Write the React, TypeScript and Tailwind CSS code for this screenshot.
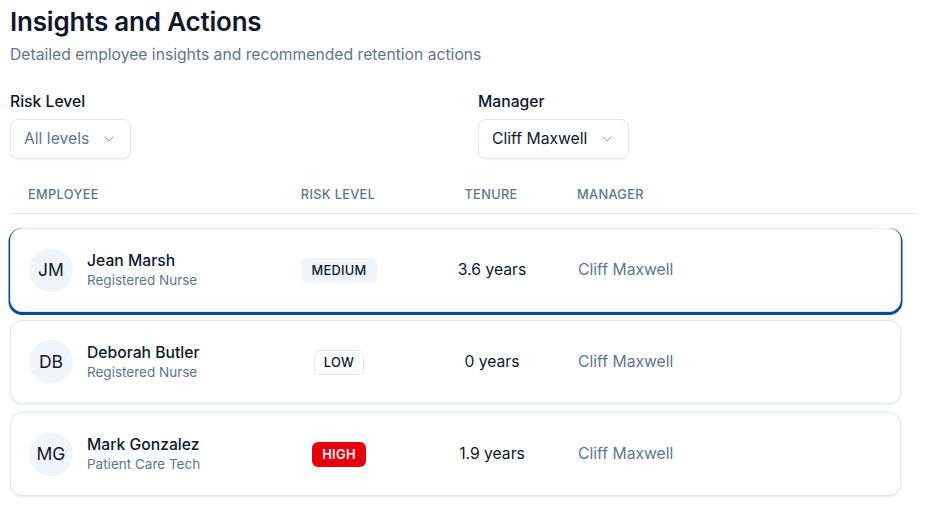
import { ChevronDown } from 'lucide-react';

type Risk = 'medium' | 'low' | 'high';

const employees: { initials: string; name: string; role: string; risk: Risk; tenure: string; manager: string }[] = [
  { initials: 'JM', name: 'Jean Marsh', role: 'Registered Nurse', risk: 'medium', tenure: '3.6 years', manager: 'Cliff Maxwell' },
  { initials: 'DB', name: 'Deborah Butler', role: 'Registered Nurse', risk: 'low', tenure: '0 years', manager: 'Cliff Maxwell' },
  { initials: 'MG', name: 'Mark Gonzalez', role: 'Patient Care Tech', risk: 'high', tenure: '1.9 years', manager: 'Cliff Maxwell' },
];

const badgeStyles: Record<Risk, string> = {
  medium: 'bg-slate-100 text-slate-900 border border-transparent',
  low: 'bg-white text-slate-900 border border-slate-200',
  high: 'bg-red-600 text-white border border-transparent font-semibold',
};

function Select({ value, muted }: { value: string; muted?: boolean }) {
  return (
    <button className="flex items-center gap-3 h-10 px-[13px] rounded-lg border border-slate-200 bg-white shadow-xs text-[15.7px]">
      <span className={muted ? 'text-slate-500' : 'text-slate-900'}>{value}</span>
      <ChevronDown className="w-4 h-4 text-slate-400" strokeWidth={1.5} />
    </button>
  );
}

export default function App() {
  return (
    <div className="min-h-screen bg-white font-['Inter',sans-serif] pl-[10px] pr-[9px] pt-[5px]">
      {/* Header */}
      <h1 className="text-[26px] leading-8 font-semibold text-slate-900 tracking-[-0.2px] mt-[1px]">Insights and Actions</h1>
      <p className="mt-[5px] text-[15.7px] text-slate-500">Detailed employee insights and recommended retention actions</p>

      {/* Filters */}
      <div className="grid grid-cols-[468px_1fr] mt-[23px]">
        <div>
          <label className="block text-[15.7px] font-medium text-slate-900 mb-[6px]">Risk Level</label>
          <Select value="All levels" muted />
        </div>
        <div>
          <label className="block text-[15.7px] font-medium text-slate-900 mb-[6px]">Manager</label>
          <Select value="Cliff Maxwell" />
        </div>
      </div>

      {/* Table */}
      <div className="mt-[17px]">
        <div className="flex items-center h-[38px] pl-[18px] border-b border-slate-200 text-[12.8px] font-medium uppercase tracking-wide text-slate-500">
          <div className="w-[254px]">Employee</div>
          <div className="w-[112px] text-center">Risk Level</div>
          <div className="w-[172px] ml-[11px] text-center">Tenure</div>
          <div className="flex-1">Manager</div>
        </div>

        <div className="flex flex-col gap-2 mt-[14px] w-[891px]">
          {employees.map((e, i) => (
            <div
              key={e.name}
              className={`flex items-center h-[84px] pl-[18px] rounded-xl border border-slate-200 bg-white ${
                i === 0 ? 'shadow-[0_1.5px_0_1.5px_#0c4a9f]' : 'shadow-[0_1px_2px_rgba(15,23,42,0.08)]'
              }`}
            >
              <div className="w-[254px] flex items-center gap-[14px]">
                <div className="w-11 h-11 rounded-full bg-slate-100 flex items-center justify-center text-[17.5px] text-slate-900">
                  {e.initials}
                </div>
                <div className="leading-tight">
                  <div className="text-[15.7px] font-medium text-slate-900">{e.name}</div>
                  <div className="text-[13.5px] text-slate-500 mt-[2px]">{e.role}</div>
                </div>
              </div>
              <div className="w-[112px] flex justify-center">
                <span className={`px-[9px] py-[2px] rounded-md text-[12.8px] font-medium uppercase tracking-wide ${badgeStyles[e.risk]}`}>
                  {e.risk}
                </span>
              </div>
              <div className="w-[172px] ml-[11px] text-center text-[15.7px] text-slate-900">{e.tenure}</div>
              <div className="flex-1 text-[15.7px] text-slate-500">{e.manager}</div>
            </div>
          ))}
        </div>
      </div>
    </div>
  );
}
